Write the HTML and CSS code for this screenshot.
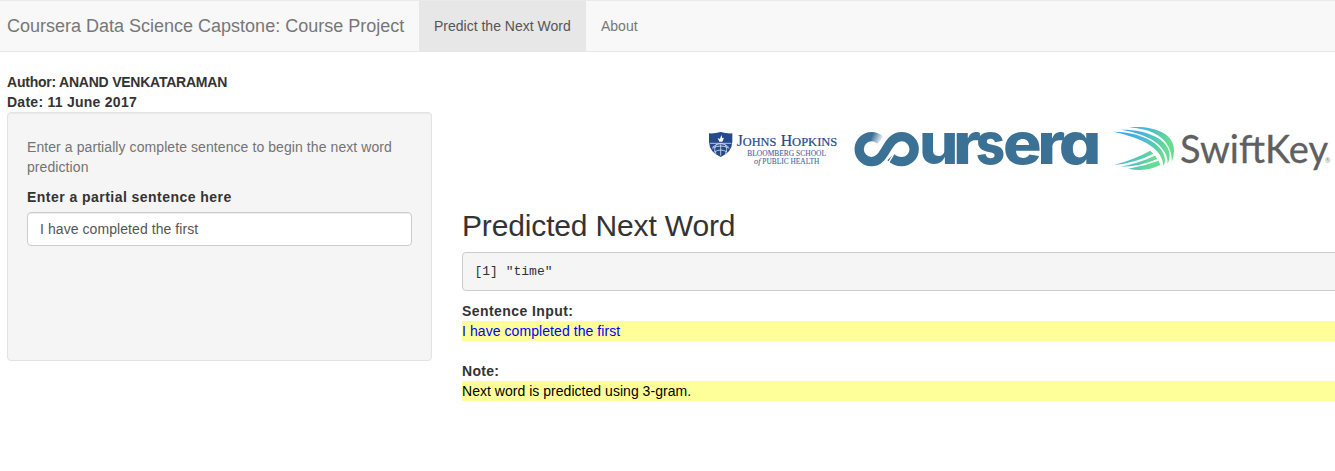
FILE: index.html
```html
<!DOCTYPE html>
<html lang="en">
<head>
<meta charset="utf-8">
<title>Coursera Data Science Capstone: Course Project</title>
<link rel="stylesheet" href="styles.css">
</head>
<body>
<nav class="navbar">
  <span class="brand">Coursera Data Science Capstone: Course Project</span>
  <a class="tab active">Predict the Next Word</a>
  <a class="tab">About</a>
</nav>
<div class="byline"><div class="author">Author: ANAND VENKATARAMAN</div><div class="date">Date: 11 June 2017</div></div>
<div class="row">
  <form class="well">
    <p class="help">Enter a partially complete sentence to begin the next word prediction</p>
    <label class="label" for="sentence">Enter a partial sentence here</label>
    <input class="field" id="sentence" type="text" value="I have completed the first">
  </form>
  <main class="main">
    <div class="logos">
      <svg class="logo-jh" viewBox="0 0 450 195">
        <path fill="#254a8c" d="M27 55Q45 56 62 51Q79 56 97 55L97 80Q96 111 62 126Q28 111 27 80Z"/>
        <path fill="#fff" d="M58 80L53 69L60 72L64 60L67 70L72 68L67 80Z"/>
        <path fill="none" stroke="#fff" stroke-width="2" d="M30 85H94M36 100Q62 86 88 100M43 111Q62 99 81 111M62 88V122M50 88Q39 101 48 117M74 88Q85 101 76 117M38 96Q62 76 86 96"/>
        <g class="jh-text">
          <text x="110" y="92" font-size="48" textLength="119" lengthAdjust="spacingAndGlyphs">J<tspan font-size="38">OHNS</tspan></text>
          <text x="242" y="92" font-size="48" textLength="170" lengthAdjust="spacingAndGlyphs">H<tspan font-size="38">OPKINS</tspan></text>
          <text class="jh-small" x="142" y="124" font-size="23" textLength="236" lengthAdjust="spacingAndGlyphs">BLOOMBERG SCHOOL</text>
          <text class="jh-small" x="162" y="147" font-size="23" textLength="196" lengthAdjust="spacingAndGlyphs"><tspan font-style="italic" font-size="26">of</tspan> PUBLIC HEALTH</text>
        </g>
      </svg>
      <svg class="logo-coursera" viewBox="0 0 780 195">
        <defs>
          <linearGradient id="fade" gradientUnits="userSpaceOnUse" x1="82" y1="60" x2="113" y2="75">
            <stop offset="0" stop-color="#3c7196"/><stop offset="1" stop-color="#3c7196" stop-opacity="0"/>
          </linearGradient>
        </defs>
        <g fill="none" stroke-width="28">
          <path stroke="#3c7196" d="M81 65A37.5 37.5 0 1 0 79 140C124 140 123 65 170 65A37.5 37.5 0 1 1 170 140Q151 140 137 126"/>
          <path stroke="url(#fade)" d="M80 65Q94 65 106 76"/>
          <path stroke="#fff" stroke-width="4" d="M128 147Q140 128 151 109"/>
        </g>
        <g class="coursera-text">
          <text x="222" y="148" textLength="118" lengthAdjust="spacingAndGlyphs">u</text>
          <text x="324" y="148" textLength="84" lengthAdjust="spacingAndGlyphs">r</text>
          <text x="392" y="148" textLength="88" lengthAdjust="spacingAndGlyphs">s</text>
          <text x="474" y="148" textLength="116" lengthAdjust="spacingAndGlyphs">e</text>
          <text x="577" y="148" textLength="84" lengthAdjust="spacingAndGlyphs">r</text>
          <text x="641" y="148" textLength="128" lengthAdjust="spacingAndGlyphs">a</text>
        </g>
      </svg>
      <svg class="logo-swiftkey" viewBox="0 0 705 195">
        <defs>
          <linearGradient id="wing" gradientUnits="userSpaceOnUse" x1="60" y1="45" x2="195" y2="110">
            <stop offset="0" stop-color="#3ba0f5"/><stop offset=".5" stop-color="#4cb9d2"/><stop offset="1" stop-color="#65dc91"/>
          </linearGradient>
          <linearGradient id="tail" gradientUnits="userSpaceOnUse" x1="70" y1="135" x2="150" y2="165">
            <stop offset="0" stop-color="#48b8d2"/><stop offset="1" stop-color="#65dc91"/>
          </linearGradient>
        </defs>
        <path fill="url(#wing)" d="M87 37C155 31 224 52 222 108Q221 126 216 139Q215 115 207 98C188 59 144 41 87 37ZM61 44C137 42 211 72 209 124Q208 137 203 146Q203 126 194 111C172 72 119 53 61 44ZM41 50C115 50 194 83 195 136Q195 145 191 153Q188 133 180 120C157 83 101 64 41 50Z"/>
        <path fill="url(#tail)" d="M41 150Q100 135 151 107L160 116Q109 143 41 150ZM61 155Q116 145 165 122L172 132Q122 155 61 155ZM85 161Q133 153 176 137L181 150Q137 172 85 161Z"/>
        <text class="swift-text" x="240" y="143" textLength="444" lengthAdjust="spacingAndGlyphs">SwiftKey</text>
        <text class="swift-mark" x="675" y="143">®</text>
      </svg>
    </div>
    <h2 class="title">Predicted Next Word</h2>
    <pre class="output">[1] "time"</pre>
    <div class="heading sentence">Sentence Input:</div>
    <div class="highlight blue">I have completed the first</div>
    <div class="heading note">Note:</div>
    <div class="highlight">Next word is predicted using 3-gram.</div>
  </main>
</div>
</body>
</html>
```
FILE: styles.css
```css
* { box-sizing: border-box; }
body {
  margin: 0;
  overflow: hidden;
  background: #fff;
  color: #333;
  font: 14px/20px "Liberation Sans", Arial, sans-serif;
}
.navbar {
  display: flex;
  height: 52px;
  padding-left: 7px;
  background: #f8f8f8;
  border-top: 1px solid #e9e9ee;
  border-bottom: 1px solid #e7e7e7;
  color: #777;
}
.brand { width: 412px; padding-top: 15px; font-size: 18px; white-space: nowrap; }
.tab { padding: 15px 15px 0; }
.active { width: 167px; background: #e7e7e7; color: #555; }
.byline { padding: 20px 7px 0; font-weight: bold; }
.author { letter-spacing: -.23px; }
.date { letter-spacing: .26px; }
.row { display: flex; gap: 30px; padding-left: 7px; }
.well {
  flex: none;
  width: 425px;
  height: 249px;
  padding: 24px 19px;
  background: #f5f5f5;
  border: 1px solid #e3e3e3;
  border-radius: 4px;
  box-shadow: inset 0 1px 1px rgba(0, 0, 0, .05);
}
.help { margin: 0 -5px 10px 0; color: #737373; letter-spacing: .08px; }
.label { display: block; margin-bottom: 5px; font-weight: bold; letter-spacing: .46px; }
.field {
  display: block;
  width: 385px;
  height: 34px;
  padding: 6px 12px;
  border: 1px solid #ccc;
  border-radius: 4px;
  box-shadow: inset 0 1px 1px rgba(0, 0, 0, .075);
  color: #555;
  font: inherit;
  letter-spacing: .07px;
}
.main { flex: none; width: 890px; }
.logos { display: flex; height: 65px; margin: 3px 0 0 238px; }
.logos svg { flex: none; height: 65px; overflow: visible; }
.logo-jh { width: 150px; }
.logo-coursera { width: 260px; margin-left: -5px; }
.logo-swiftkey { width: 235px; margin-left: -5px; }
.jh-text { fill: #254a8c; stroke: #254a8c; stroke-width: .6; font-family: "Liberation Serif", serif; }
.jh-small { fill: #4968a0; stroke: #4968a0; stroke-width: .3; }
.coursera-text {
  fill: #3c7196;
  font: 800 172px Inter, sans-serif;
  font-feature-settings: "cv11";
}
.swift-text { fill: #606060; stroke: #606060; stroke-width: .8; font: 400 115px Lato, sans-serif; }
.swift-mark { fill: #888; font: 20px Lato, sans-serif; }
.title { margin: 29px 0 10px; font-size: 30px; line-height: 33px; font-weight: 400; letter-spacing: -.15px; }
.output {
  height: 39px;
  margin: 0 0 10px;
  padding: 10px 11.5px;
  background: #f5f5f5;
  border: 1px solid #ccc;
  border-radius: 4px;
  font: 13px/18.5px "Liberation Mono", monospace;
}
.heading { font-weight: bold; }
.sentence { letter-spacing: .43px; }
.note { margin-top: 20px; letter-spacing: .3px; }
.highlight { background: #ff9; color: #000; letter-spacing: .03px; }
.blue { color: #00f; letter-spacing: .07px; }
```
